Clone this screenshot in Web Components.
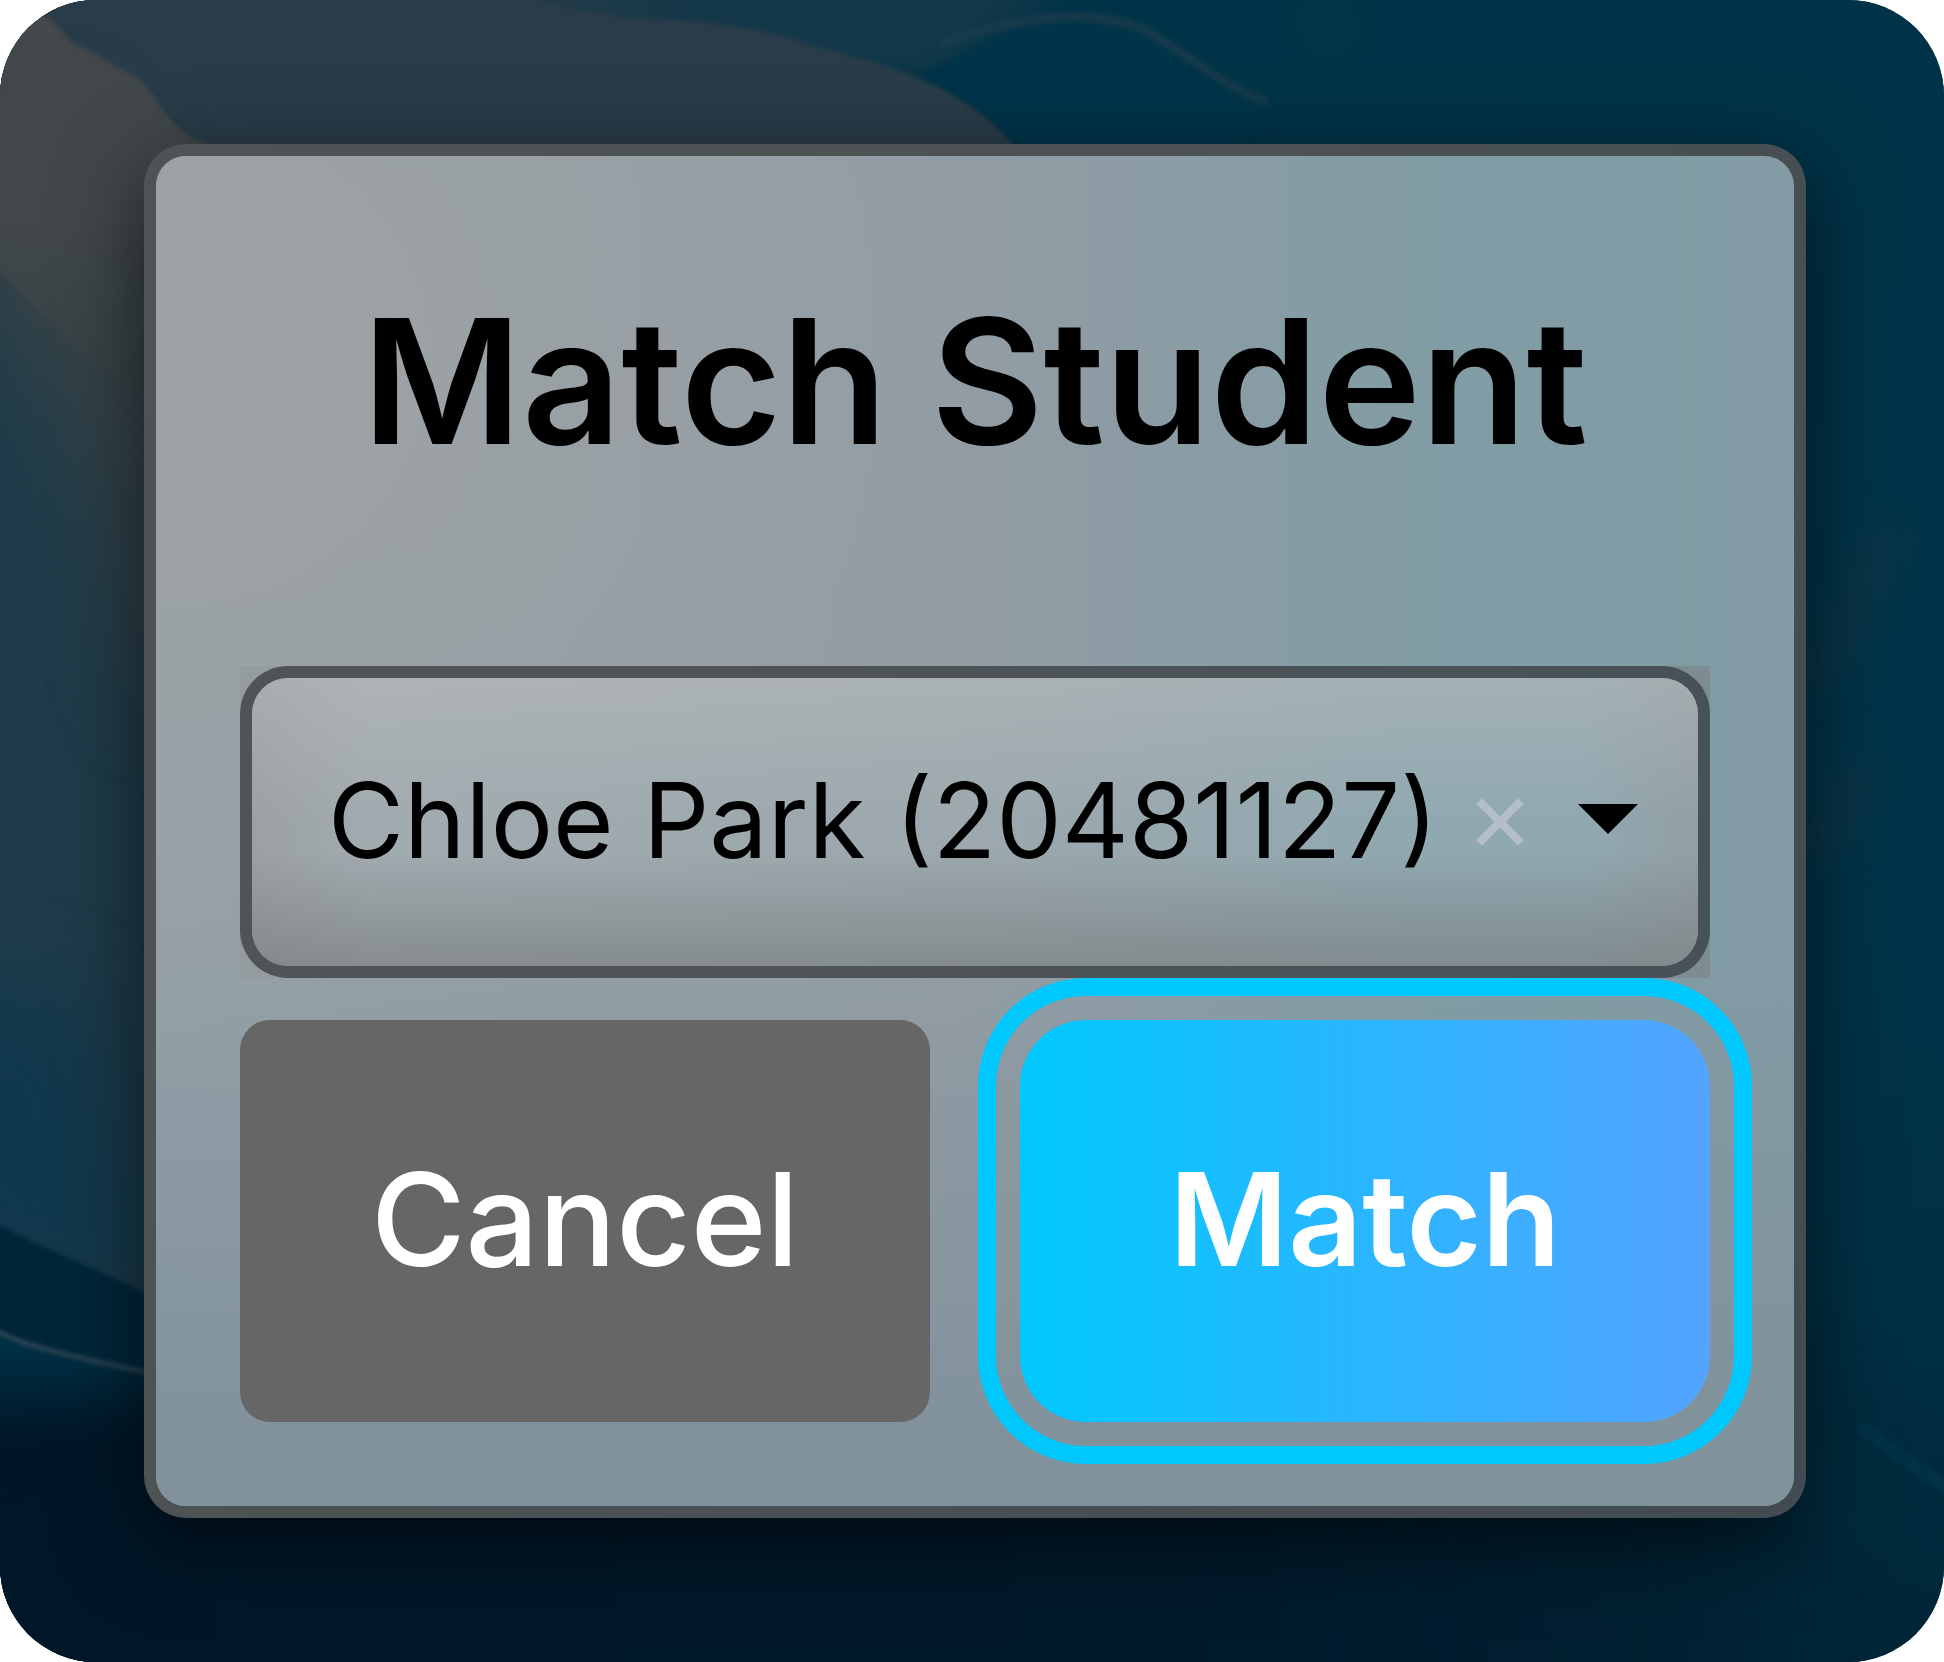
<!DOCTYPE html>
<html lang="en">
<head>
<meta charset="utf-8">
<title>Match Student</title>
<style>
    body {
        margin: 0;
        background: #fff;
        font-family: Inter, "Liberation Sans", sans-serif;
        color: #000;
    }
</style>
</head>
<body>
<wallpaper-scene>
    <dialog-card heading="Match Student">
        <student-select></student-select>
        <action-button slot="actions">Cancel</action-button>
        <action-button slot="actions" primary>Match</action-button>
    </dialog-card>
</wallpaper-scene>

<script>
// WALLPAPER
const wallpaperTemplate = document.createElement('template');
wallpaperTemplate.innerHTML = `
    <style>
        :host {
            display: grid;
            min-height: 100vh;
            box-sizing: border-box;
            overflow: hidden;
            border-radius: 96px;
            background: #003347;
            position: relative;
        }

        svg {
            position: absolute;
            inset: 0;
            width: 100%;
            height: 100%;
        }

        .content {
            position: relative;
            padding: 144px 138px 144px 144px;
        }
    </style>
    <svg viewBox="0 0 1944 1662" preserveAspectRatio="none" aria-hidden="true">
        <defs>
            <linearGradient id="sea" x1="0" y1="0" x2="0" y2="1">
                <stop offset="0" stop-color="#003347"/>
                <stop offset=".5" stop-color="#003449"/>
                <stop offset=".78" stop-color="#003044"/>
                <stop offset="1" stop-color="#002536"/>
            </linearGradient>
            <linearGradient id="left" x1="0" y1="0" x2="1" y2="0">
                <stop offset="0" stop-color="#1f3c4a"/>
                <stop offset=".5" stop-color="#213b49"/>
                <stop offset="1" stop-color="#003347" stop-opacity="0"/>
            </linearGradient>
            <linearGradient id="deep" x1="0" y1="0" x2="1" y2="0">
                <stop offset="0" stop-color="#001728"/>
                <stop offset=".6" stop-color="#001a2b"/>
                <stop offset=".85" stop-color="#001f30" stop-opacity=".8"/>
                <stop offset="1" stop-color="#002a3b" stop-opacity="0"/>
            </linearGradient>
            <linearGradient id="glow" x1="0" y1="0" x2="0" y2="1">
                <stop offset="0" stop-color="#00344a"/>
                <stop offset=".8" stop-color="#001b2c"/>
                <stop offset="1" stop-color="#001728"/>
            </linearGradient>
            <linearGradient id="sand" x1="0" y1="0" x2="0" y2="1">
                <stop offset="0" stop-color="#43484a"/>
                <stop offset=".55" stop-color="#42484a"/>
                <stop offset="1" stop-color="#3b4547" stop-opacity="0"/>
            </linearGradient>
            <filter id="soft" x="-20%" y="-20%" width="140%" height="140%" color-interpolation-filters="sRGB"><feGaussianBlur stdDeviation="2"/></filter>
            <filter id="haze" x="-40%" y="-40%" width="180%" height="180%" color-interpolation-filters="sRGB"><feGaussianBlur stdDeviation="20"/></filter>
            <filter id="fog" x="-60%" y="-60%" width="220%" height="220%" color-interpolation-filters="sRGB"><feGaussianBlur stdDeviation="42"/></filter>
        </defs>
        <rect width="1944" height="1662" fill="url(#sea)"/>
        <rect width="1150" height="1400" fill="url(#left)"/>
        <path d="M-80 980 L80 1000 L170 1300 L-80 1260Z" fill="#10384c" filter="url(#fog)"/>
        <path d="M640 -20 L1060 -20 C1040 10 990 30 930 70 L790 60Z" fill="#16394a" filter="url(#haze)"/>
        <!-- dunes -->
        <path d="M40 -10 L510 -10 C540 6 600 14 648 19 C700 20 750 26 793 39 L879 64 C930 78 985 110 1018 143 L1060 220 L150 220 L60 60Z" fill="#2a3c49" filter="url(#soft)"/>
        <path d="M-40 120 L60 120 L160 220 L220 700 L150 700 C120 520 60 380 -40 270Z" fill="#374347" filter="url(#fog)"/>
        <path d="M-20 -20 L20 0 L45 16 C62 24 64 40 79 46 C95 52 110 64 124 71 C148 82 152 96 165 113 C174 126 190 142 219 146 L219 430 L150 430 L-20 250Z" fill="url(#sand)" filter="url(#soft)"/>
        <!-- ridge -->
        <path d="M985 42 C1040 14 1110 18 1152 36 C1190 54 1215 86 1268 102 L1240 160 L1018 150 C985 110 950 84 920 76Z" fill="#003449" filter="url(#soft)"/>
        <path d="M940 44 C1030 10 1110 10 1152 34 C1190 56 1225 88 1268 102" fill="none" stroke="#1a3c4b" stroke-width="10" filter="url(#soft)" opacity=".8"/>
        <path d="M1300 0 L1350 0 L1345 60 L1310 40Z" fill="#04394b" filter="url(#haze)"/>
        <!-- right edge -->
        <path d="M1890 520 C1860 620 1830 660 1800 690 M1870 760 C1850 800 1830 830 1810 860" fill="none" stroke="#1a3645" stroke-width="30" filter="url(#haze)" opacity=".7"/>
        <!-- deep water -->
        <path d="M-10 1220 C50 1252 100 1270 150 1296 L300 1360 L300 1450 L-10 1450Z" fill="#00263a" filter="url(#soft)"/>
        <path d="M-10 1326 C50 1356 100 1362 160 1376 L300 1400 L300 1700 L-10 1700 L-10 1460Z" fill="#001728" filter="url(#soft)"/>
        <path d="M-10 1326 C50 1356 100 1362 160 1376 L300 1400 L300 1450 L-10 1450Z" fill="url(#glow)"/>
        <path d="M200 1430 L1500 1420 L1960 1540 L1960 1720 L-40 1720 L-40 1470Z" fill="url(#deep)" filter="url(#haze)"/>
        <path d="M-4 1330 C20 1345 60 1352 90 1360 C110 1364 130 1370 160 1374" fill="none" stroke="#2a4552" stroke-width="5" filter="url(#soft)"/>
        <path d="M1800 1340 C1850 1430 1900 1450 1960 1500 L1960 1600 C1900 1560 1840 1530 1780 1500Z" fill="#002b3d" filter="url(#haze)"/>
        <path d="M1860 1425 C1890 1450 1920 1470 1960 1498" fill="none" stroke="#053c50" stroke-width="14" filter="url(#soft)" opacity=".4"/>
    </svg>
    <div class="content"><slot></slot></div>
`;

class WallpaperScene extends HTMLElement {
    constructor() {
        super();
        const shadow = this.attachShadow({ mode: 'open' });
        shadow.appendChild(wallpaperTemplate.content.cloneNode(true));
    }
}

customElements.define('wallpaper-scene', WallpaperScene);

// DIALOG CARD
const dialogCardTemplate = document.createElement('template');
dialogCardTemplate.innerHTML = `
    <style>
        :host {
            display: block;
        }

        section {
            padding: 84px;
            border: 12px solid transparent;
            border-radius: 42px;
            background:
                radial-gradient(ellipse 50% 55% at 0% 15%, rgba(161, 163, 164, .9), rgba(161, 163, 164, 0)) padding-box,
                linear-gradient(180deg, rgba(128, 145, 155, 0) 60%, rgba(128, 145, 155, .9) 94%) padding-box,
                linear-gradient(90deg, #92a0a7, #929ca4 50%, #809ca4 80%, #829ba4) padding-box,
                linear-gradient(115deg, #4f5355, #4b5154 50%, #414b51) border-box;
            box-shadow: 0 24px 84px rgba(0, 0, 0, .6);
        }

        h1 {
            margin: 36px 0 180px;
            font-size: 173px;
            line-height: 210px;
            font-weight: 600;
            text-align: center;
            white-space: nowrap;
        }

        .actions {
            display: grid;
            grid-template-columns: 1fr 1fr;
            gap: 90px;
            margin-top: 42px;
        }
    </style>
    <section role="dialog" aria-labelledby="heading">
        <h1 id="heading"></h1>
        <slot></slot>
        <div class="actions"><slot name="actions"></slot></div>
    </section>
`;

class DialogCard extends HTMLElement {
    constructor() {
        super();
        const shadow = this.attachShadow({ mode: 'open' });
        shadow.appendChild(dialogCardTemplate.content.cloneNode(true));
    }

    connectedCallback() {
        this.shadowRoot.querySelector('h1').textContent = this.getAttribute('heading');
    }
}

customElements.define('dialog-card', DialogCard);

// STUDENT SELECT
const studentSelectTemplate = document.createElement('template');
studentSelectTemplate.innerHTML = `
    <style>
        :host {
            display: block;
            background: linear-gradient(90deg, #949c9f, #8c979b 50%, #7d8c91);
        }

        .field {
            display: flex;
            align-items: center;
            height: 288px;
            padding: 0 60px 0 76px;
            border: 12px solid transparent;
            border-radius: 48px;
            background:
                linear-gradient(180deg, rgba(190, 190, 190, .42), rgba(190, 190, 190, 0) 50%, rgba(118, 122, 123, 0) 60%, rgba(118, 122, 123, .62)) padding-box,
                linear-gradient(90deg, rgba(148, 150, 153, .5), rgba(148, 150, 153, 0) 8%, rgba(148, 150, 153, 0) 92%, rgba(148, 150, 153, .5)) padding-box,
                linear-gradient(90deg, #a2abb0, #9ca8ad 50%, #90a8b0 80%) padding-box,
                linear-gradient(90deg, #4f5557, #4d5356 50%, #465258) border-box;
        }

        select {
            flex: 1;
            min-width: 0;
            height: 100%;
            margin: 0;
            padding: 0 0 4px;
            border: 0;
            appearance: none;
            background: none;
            font: 104px/126px Inter, "Liberation Sans", sans-serif;
            color: #000;
        }

        button {
            display: flex;
            margin: 0 54px 0 0;
            padding: 0;
            border: 0;
            background: none;
        }

        .arrow {
            pointer-events: none;
        }

        svg {
            display: block;
        }
    </style>
    <div class="field">
        <select aria-label="Student">
            <option selected>Chloe Park (20481127)</option>
        </select>
        <button type="button" aria-label="Clear">
            <svg width="48" height="48" viewBox="0 0 48 48" aria-hidden="true">
                <path d="M3 3L45 45M45 3L3 45" stroke="#b3bec6" stroke-width="8"/>
            </svg>
        </button>
        <svg class="arrow" width="60" height="40" viewBox="0 0 60 40" aria-hidden="true">
            <path d="M0 2h60L30 32z"/>
        </svg>
    </div>
`;

class StudentSelect extends HTMLElement {
    constructor() {
        super();
        const shadow = this.attachShadow({ mode: 'open' });
        shadow.appendChild(studentSelectTemplate.content.cloneNode(true));
        shadow.querySelector('button').addEventListener('click', () => {
            shadow.querySelector('select').selectedIndex = -1;
        });
    }
}

customElements.define('student-select', StudentSelect);

// ACTION BUTTON
const actionButtonTemplate = document.createElement('template');
actionButtonTemplate.innerHTML = `
    <style>
        :host {
            display: block;
        }

        button {
            display: block;
            width: 100%;
            height: 402px;
            margin: 0;
            padding: 0 0 4px;
            border: 0;
            border-radius: 30px;
            background: #666;
            color: #fff;
            font: 500 129px/156px Inter, "Liberation Sans", sans-serif;
        }

        :host([primary]) button {
            border-radius: 66px;
            background: linear-gradient(90deg, #00c8ff, #54a4ff);
            font-weight: 600;
            outline: 18px solid #00c8ff;
            outline-offset: 24px;
        }
    </style>
    <button type="button"><slot></slot></button>
`;

class ActionButton extends HTMLElement {
    constructor() {
        super();
        const shadow = this.attachShadow({ mode: 'open' });
        shadow.appendChild(actionButtonTemplate.content.cloneNode(true));
    }
}

customElements.define('action-button', ActionButton);
</script>
</body>
</html>
